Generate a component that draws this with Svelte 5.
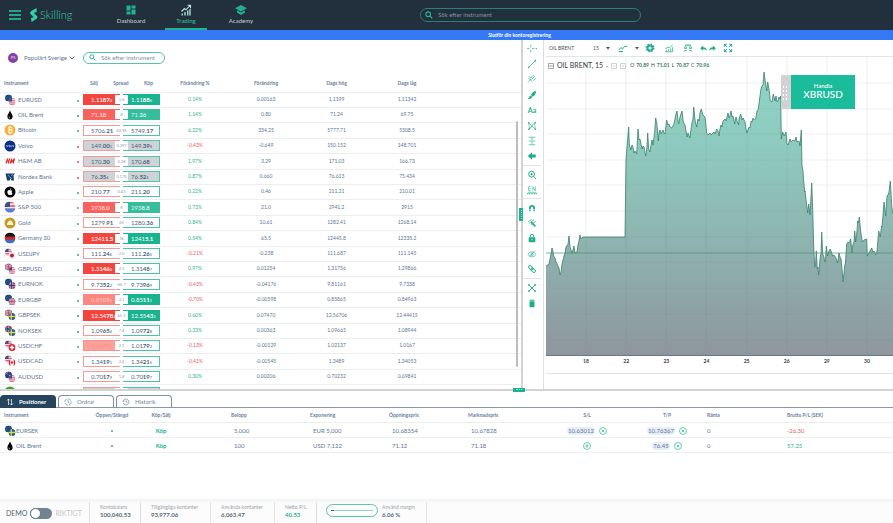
<script>
  let query = $state('');
  let filter = $state('');
  let group = $state('Populärt Sverige');
  let live = $state(false);

  const nav = [
    { id: 'dashboard', label: 'Dashboard' },
    { id: 'trading', label: 'Trading', active: true },
    { id: 'academy', label: 'Academy' }
  ];

  // s / b: [leading digits, highlighted digits, fractional pip]
  const rows = [
    { n: 'EURUSD', f: ['eu', 'us'], s: ['1.11', '87', '0'], sp: '1.6', b: ['1.11', '88', '6'], st: ['red', 'green'], v: ['0.14%', '0.00163', '1.1199', '1.11342'] },
    { n: 'OIL Brent', f: ['oil'], s: ['71.', '18', ''], sp: '8', b: ['71.', '26', ''], st: ['red2', 'green2'], v: ['1.14%', '0.80', '71.24', '69.75'] },
    { n: 'Bitcoin', f: ['btc'], s: ['5706.', '21', ''], sp: '42.96', b: ['5749.', '17', ''], st: ['', ''], v: ['6.22%', '334.25', '5777.71', '5308.5'] },
    { n: 'Volvo', f: ['volvo'], down: true, s: ['149.', '00', '1'], sp: '0.397', b: ['149.', '39', '8'], st: ['grey', 'grey'], v: ['-0.43%', '-0.649', '150.152', '148.701'] },
    { n: 'H&M AB', f: ['hm'], down: true, s: ['170.', '30', ''], sp: '0.38', b: ['170.', '68', ''], st: ['grey', 'grey'], v: ['1.97%', '3.29', '171.03', '166.73'] },
    { n: 'Nordea Bank', f: ['nordea'], down: true, s: ['76.', '35', '4'], sp: '0.170', b: ['76.', '52', '4'], st: ['grey', 'grey'], v: ['0.87%', '0.660', '76.613', '75.434'] },
    { n: 'Apple', f: ['apple'], s: ['210.', '77', ''], sp: '0.43', b: ['211.', '20', ''], st: ['', ''], v: ['0.22%', '0.46', '211.21', '210.01'] },
    { n: 'S&P 500', f: ['sp'], s: ['293', '8.0', ''], sp: '8', b: ['293', '8.8', ''], st: ['red2', 'green2'], v: ['0.73%', '21.0', '2941.2', '2915'] },
    { n: 'Gold', f: ['gold'], s: ['1279.', '91', ''], sp: '45', b: ['1280.', '36', ''], st: ['', ''], v: ['0.84%', '10.61', '1282.41', '1268.14'] },
    { n: 'Germany 30', f: ['dax'], s: ['1241', '1.5', ''], sp: '36', b: ['1241', '5.1', ''], st: ['red', 'green'], v: ['0.54%', '65.5', '12445.8', '12335.2'] },
    { n: 'USDJPY', f: ['us', 'jp'], s: ['111.', '24', '6'], sp: '2.0', b: ['111.', '26', '5'], st: ['', ''], v: ['-0.21%', '-0.238', '111.687', '111.145'] },
    { n: 'GBPUSD', f: ['gb', 'us'], s: ['1.31', '46', '6'], sp: '2.1', b: ['1.31', '48', '7'], st: ['red', ''], v: ['0.97%', '0.01254', '1.31756', '1.29866'] },
    { n: 'EURNOK', f: ['eu', 'no'], s: ['9.73', '52', '2'], sp: '44.7', b: ['9.73', '96', '9'], st: ['', ''], v: ['-0.43%', '-0.04176', '9.81161', '9.7338'] },
    { n: 'EURGBP', f: ['eu', 'gb'], s: ['0.85', '09', '0'], sp: '2.1', b: ['0.85', '11', '1'], st: ['pink', 'green'], v: ['-0.70%', '-0.00598', '0.85865', '0.84963'] },
    { n: 'GBPSEK', f: ['gb', 'se'], s: ['12.54', '78', '2'], sp: '65.1', b: ['12.55', '43', '3'], st: ['red', 'green'], v: ['0.60%', '0.07470', '12.56706', '12.44415'] },
    { n: 'NOKSEK', f: ['no', 'se'], s: ['1.09', '65', '4'], sp: '7.4', b: ['1.09', '72', '8'], st: ['', ''], v: ['0.33%', '0.00363', '1.09665', '1.08944'] },
    { n: 'USDCHF', f: ['us', 'ch'], s: ['1.01', '77', '1'], sp: '2.1', b: ['1.01', '79', '2'], st: ['faded', ''], v: ['-0.13%', '-0.00129', '1.02137', '1.0167'] },
    { n: 'USDCAD', f: ['us', 'ca'], s: ['1.34', '19', '1'], sp: '2.4', b: ['1.34', '21', '5'], st: ['', ''], v: ['-0.41%', '-0.00545', '1.3489', '1.34053'] },
    { n: 'AUDUSD', f: ['au', 'us'], s: ['0.70', '17', '9'], sp: '1.8', b: ['0.70', '19', '7'], st: ['', ''], v: ['0.30%', '0.00206', '0.70232', '0.69841'] },
    { n: '', f: ['green'], s: ['', '', ''], sp: '', b: ['', '', ''], st: ['grey', 'grey'], v: ['', '', '', ''] }
  ];

  const tools = [
    ['cross', 'line', 'fork', 'brush', 'text', 'pattern', 'range', 'back'],
    ['zoomin', 'measure'],
    ['magnet', 'wand', 'lock', 'eye', 'link'],
    ['tree', 'trash']
  ];

  const positions = [
    { n: 'EURSEK', f: ['eu', 'se'], amount: '5,000', exp: 'EUR 5,000', open: '10.68354', mkt: '10.67828', sl: '10.63012', tp: '10.76367', rate: '0', pl: '-26.30' },
    { n: 'OIL Brent', f: ['oil'], amount: '100', exp: 'USD 7,122', open: '71.12', mkt: '71.18', sl: '', tp: '76.45', rate: '0', pl: '57.25' }
  ];

  const account = [
    ['Kontobalans', '100,040.53', 'w1'],
    ['Tillgängliga kontanter', '93,977.06', 'w2'],
    ['Använda kontanter', '6,063.47', 'w3'],
    ['Netto P/L', '40.53', 'w4']
  ];

  const line =
    '546,267 549,265 551,255 552,249 553,253 554,258 555,259 556,263 558,267 559,269 560,276 561,273 562,265 564,257 565,254 566,248 568,245 569,237 570,248 572,254 573,251 574,247 575,254 577,253 578,246 579,242 580,236 581,240 583,238 625,238 ' +
    '626,161 627,148 628.7,128 629.3,146 631,151 632,146 633,148 634,154 635,152 636.7,155 638,130 639,141 640,140 641,145 642,150 643,147 644,148 645.7,157 647,148 647.7,134 648.7,150 650,153 651,146 652,141 653,146 654.7,133 655.7,119 657,126 658.3,142 659,134 660,131 661,135 663,131 664,134 665,135 666.7,121 668,126 669,125 670,128 671.7,129 673,127 674,125 675.7,116 677,112 678,122 678.7,125 680,118 682,112 683.3,123 685,126 687,138 688,134 690,139 691,130 692,124 693,120 693.7,108 695,121 696.7,128 698,120 699,122 700,114 701.3,110 703,116 705,118 706.7,134 708,136 710,134 711,136 714,133 715,135 716.7,130 718,132 719,137 720,130 721,126 722,128 723,122 725,120 726,122 727,118 728,114 729,119 730,117 731,112 732,118 733,117 734.7,125 736,118 737,122 738.7,126 739,120 740.7,115 742,121 743,119 745,123 746,130 747,134 749,128 750,129 751,122 752,123 753,119 754,121 755.7,120 757,112 758.3,110 760,97 761,90 762,87 763,86 764,73 765,81 765.7,85 766.7,92 767.7,83 769,90 770.3,102 772,103 773.3,95 775,102 776,97 777,103 778,102 779,98 780,100 780.7,97 ' +
    '781.3,140 782.7,133 784.3,137 786,133 787,145 788,146 790,140 791,143 793,141 795,142 796,138 797,143 799,142 800,147 801.3,131 802,167 803,172 803.5,180 804.7,193 805,192 806.3,203 807.7,214 808.7,205 810,216 811.7,184 812.7,210 813.7,247 814.7,268 815.5,266 816.3,252 817.3,270 818,268 818.7,276 820.3,257 821,255 821.7,233 822.7,255 824,258 824.7,263 825.5,262 826.3,247 827.5,257 829,252 830.3,250 832.7,257 834,256 836,259 837.7,264 839,254 840,258 841,260 842,270 843,283 844.7,267 845.5,263 846.7,245 848,243 849,244 850.7,240 852,254 853,245 854,243 854.7,232 855.7,243 857,232 857.7,222 858.5,224 859.3,218 860.5,231 861.5,238 862.3,243 864,241 866.7,240 867.3,257 870,252 871.7,249 873,253 874,252 875.7,256 877,252 878.7,232 880.3,238 881.5,227 882,228 882.7,220 884,203 885.7,217 887,197 888,196 889,193 890.3,182 891,194 891.7,207 893,215';

  const gridX = [586, 626, 666, 706, 747, 787, 827, 867];
  const gridY = [84, 110, 135, 161, 186, 212, 238, 263, 289, 315, 341];
  const days = ['18', '22', '23', '24', '25', '26', '29', '30'];
</script>

{#snippet flag(code)}
  {#if code === 'eu'}
    <rect width="10" height="10" fill="#174a84" /><circle cx="5" cy="5" r="2.6" fill="none" stroke="#b8b65c" stroke-width=".5" stroke-dasharray=".8 1.2" />
  {:else if code === 'us'}
    <rect width="10" height="10" fill="#f4e6ea" /><path d="M0 1h10M0 4h10M0 7h10M0 9.5h10" stroke="#d8526a" stroke-width="1.4" /><rect width="5" height="5" fill="#3a4f8f" />
  {:else if code === 'gb'}
    <rect width="10" height="10" fill="#33508f" /><path d="M0 0l10 10M10 0L0 10M5 0v10M0 5h10" stroke="#e9dfe8" stroke-width="2" /><path d="M0 0l10 10M10 0L0 10M5 0v10M0 5h10" stroke="#d43a52" stroke-width="1.1" />
  {:else if code === 'jp'}
    <rect width="10" height="10" fill="#f3eef0" /><circle cx="5" cy="5" r="2.8" fill="#c81f3f" />
  {:else if code === 'no'}
    <rect width="10" height="10" fill="#c8324a" /><path d="M4 0v10M0 5h10" stroke="#fff" stroke-width="3" /><path d="M4 0v10M0 5h10" stroke="#1c3f86" stroke-width="1.8" />
  {:else if code === 'se'}
    <rect width="10" height="10" fill="#175a94" /><path d="M4 0v10M0 5h10" stroke="#f3d23c" stroke-width="1.8" />
  {:else if code === 'ch'}
    <rect width="10" height="10" fill="#dc2236" /><path d="M5 2v6M2 5h6" stroke="#fff" stroke-width="2.2" />
  {:else if code === 'ca'}
    <rect width="10" height="10" fill="#fff" /><path d="M0 0h2.6v10H0zM7.4 0H10v10H7.4zM5 2.4l2 2.6-2 2.6-2-2.600z" fill="#d8293d" />
  {:else if code === 'au'}
    <rect width="10" height="10" fill="#25408a" /><path d="M0 0l5 5M5 0L0 5" stroke="#e46a7b" /><circle cx="7" cy="6" r="1" fill="#fff" />
  {/if}
{/snippet}

{#snippet badge(codes)}
  <svg class="badge" viewBox="0 0 12 12" aria-hidden="true">
    {#if codes.length === 2}
      <g transform="translate(1 0.5) scale(.7)"><g clip-path="url(#disc)">{@render flag(codes[0])}</g></g>
      <g transform="translate(4.5 4) scale(.7)"><g clip-path="url(#disc)">{@render flag(codes[1])}</g></g>
    {:else if codes[0] === 'oil'}
      <path d="M6 1.5C7 4 8.6 5.5 8.6 7.6a2.6 2.8 0 0 1-5.2 0C3.4 5.5 5 4 6 1.5z" fill="#050505" /><path d="M5 7.6q0 1.3 1 1.6" stroke="#fff" stroke-width=".6" fill="none" />
    {:else if codes[0] === 'btc'}
      <circle cx="6" cy="6" r="5.5" fill="#f7b03c" /><path d="M4.3 3.3h2.4q1.3 0 1.3 1.3T6.7 5.9H5h2q1.400 0 1.4 1.4T7 8.7H4.3M5 3.3v5.4M5.5 2.3v1M6.8 2.3v1M5.5 8.7v1M6.8 8.7v1" fill="none" stroke="#fff" stroke-width=".9" />
    {:else if codes[0] === 'volvo'}
      <circle cx="6" cy="6" r="5.5" fill="#0d2f86" /><path d="M2.5 5l.8 2 .8-2M5 5.2h1v1.6H5zM7 5v2h.8M8.5 5l.7 2 .7-2" fill="none" stroke="#b9c7ec" stroke-width=".6" />
    {:else if codes[0] === 'hm'}
      <path d="M3.6 3.5L2 8.5M5.600 3.5L4.200 8.5M2.6 6.200h2.6M6.300 8.500L7.600 3.700l.4 3.300 2.500-3.500-1.300 5" fill="none" stroke="#dc2a2a" stroke-width="1.2" />
    {:else if codes[0] === 'nordea'}
      <path d="M1.500 2.500h9.500l-1.500 1.800.5 5.200H7.500L6 7v2.500H3L2.500 7z" fill="#16406f" /><path d="M4 4l4 4M7 4.5l2-1" stroke="#8fb1cc" stroke-width=".7" />
    {:else if codes[0] === 'apple'}
      <circle cx="6" cy="6" r="5.5" fill="#050505" /><path d="M6 4.4C4.8 3.6 3.3 4.5 3.4 6.2 3.5 7.9 4.5 9.2 5.3 9q.7-.3 1.4 0c.8.2 1.5-.8 1.8-1.6-1-.5-1.1-1.9-.1-2.5C7.8 4 6.9 4 6 4.400zM6 4q0-1.4 1.3-1.7Q7.3 3.8 6 4z" fill="#fff" />
    {:else if codes[0] === 'sp'}
      <g transform="translate(.5 .5) scale(1.1)"><g clip-path="url(#disc)">{@render flag('us')}<rect y="6.5" width="10" height="3.5" fill="#4b84d8" /></g></g>
    {:else if codes[0] === 'gold'}
      <circle cx="6" cy="6" r="5.5" fill="#c99a1f" /><path d="M2.8 8l1-3 1.6-1.5h1.4L8.3 5l1 3z" fill="#fff6d8" />
    {:else if codes[0] === 'dax'}
      <g transform="translate(.5 .5) scale(1.1)"><g clip-path="url(#disc)"><rect width="10" height="4" fill="#151515" /><rect y="4" width="10" height="3" fill="#d8222a" /><rect y="6.5" width="10" height="3.5" fill="#3f6fc6" /></g></g>
    {:else}
      <circle cx="6" cy="6" r="5.5" fill="#3ca51e" />
    {/if}
  </svg>
{/snippet}

{#snippet search()}
  <svg class="glass" viewBox="0 0 8 8" aria-hidden="true"><circle cx="3.2" cy="3.2" r="2.3" /><path d="M5 5l2.3 2.3" /></svg>
{/snippet}

{#snippet tool(id)}
  <svg class="ic" viewBox="0 0 12 12" aria-hidden="true">
    {#if id === 'cross'}<path d="M4.500 1v3M4.500 7v3M0 5.5h3M6 5.5h3" stroke-width=".8" /><circle class="s" cx="11.200" cy="5.500" r=".8" />
    {:else if id === 'line'}<path d="M2.5 9.5l7-7" stroke-width=".8" /><circle class="s" cx="2" cy="10" r="1" /><circle class="s" cx="10" cy="2" r="1" />
    {:else if id === 'fork'}<path d="M1 10l4-4M2 5l4 4M4 5l4-4M5.5 6.5l4-4M7 8l4-3M2 3l3 2" stroke-width=".8" />
    {:else if id === 'brush'}<path class="s" d="M10.5 1c.8 2.5-.5 5.200-3.200 7L4.700 6C6 3.700 8 1.700 10.5 1zM4.200 6.500L6.600 8.500C5 10.700 3.5 11 1 11 2.5 9.5 2.2 8 4.2 6.5z" />
    {:else if id === 'pattern'}<path d="M2 2l1 8 6-8 1 8M2 2l8 8M2 10l4-4" stroke-width=".7" /><circle class="s" cx="2" cy="2" r=".9" /><circle class="s" cx="10" cy="2" r=".9" /><circle class="s" cx="2" cy="10" r=".9" /><circle class="s" cx="10" cy="10" r=".9" />
    {:else if id === 'range'}<path d="M2 1.5h8M2 6h8M2 10.5h8M6 2v3M6 7v3" stroke-width=".8" />
    {:else if id === 'back'}<path class="s" d="M1 6L6 1.500v2.700h4.500v3.600H6V10.500z" />
    {:else if id === 'zoomin'}<circle cx="5.5" cy="5" r="3.5" /><path d="M8 7.8L10.8 10.8M4 5h3M5.5 3.5v3" />
    {:else if id === 'measure'}<path d="M0 10.5h12" stroke-width="1.4" stroke-dasharray="1.500 .6" /><path d="M1 8.800h10M2 2h2.5M2 4.5h2.5M2 7h2.5M2 2v5M7 7V2l3 5V2" stroke-width=".7" />
    {:else if id === 'magnet'}<path d="M3.5 10V6a2.5 2.5 0 0 1 5 0v4" stroke-width="2.2" /><path class="w" d="M2 8.2h3M7 8.2h3" />
    {:else if id === 'wand'}<path d="M5 5l5 5" stroke-width="2" /><path d="M1.500 4.500l4-2.500M2.5 6.5l6-4.500M4.500 8l6-4" stroke-width=".9" />
    {:else if id === 'lock'}<rect class="s" x="2" y="5" width="8" height="6" rx=".6" /><path d="M4 5V3.5a2 2 0 0 1 4 0V5" /><path class="w" d="M6 7v1.5" />
    {:else if id === 'eye'}<path d="M1 6.5q5-6.5 10 0q-5 6-10 0zM2.5 10L9.5 2" stroke-width=".7" /><circle cx="6" cy="6.3" r="1.5" stroke-width=".7" />
    {:else if id === 'link'}<rect x="1.500" y="2.8" width="6" height="3.4" rx="1.7" transform="rotate(45 4.5 4.5)" /><rect x="4.5" y="5.8" width="6" height="3.4" rx="1.7" transform="rotate(45 7.5 7.5)" />
    {:else if id === 'tree'}<path d="M2.5 2.5l7 7M9.5 2.5l-7 7" /><circle class="s" cx="2.3" cy="2.3" r="1.1" /><circle class="s" cx="9.7" cy="2.3" r="1.1" /><circle class="s" cx="2.3" cy="9.7" r="1.1" /><circle class="s" cx="9.7" cy="9.7" r="1.1" />
    {:else if id === 'trash'}<path class="s" d="M3 4h6v7H3zM3 2h6v1.2H3z" />{/if}
  </svg>
{/snippet}

{#snippet price(p, side, tone)}
  <button class="price {side} {tone}" aria-label={side === 'sell' ? 'Sälj' : 'Köp'}>{p[0]}<b>{p[1]}</b><small>{p[2]}</small></button>
{/snippet}

<svg class="defs" aria-hidden="true"><defs><clipPath id="disc"><circle cx="5" cy="5" r="5" /></clipPath></defs></svg>

<div class="app">
  <header>
    <button class="menu" aria-label="Meny"><i></i><i></i><i></i></button>
    <a class="logo" href="#home">
      <svg viewBox="0 0 10 14" aria-hidden="true"><path d="M7.5 0L2 3.2Q.4 4.5 1.5 6L4.8 9 2 10.2 2.6 14 7.6 10.8Q9.2 9.4 8 8L4.8 5 7.8 3.8z" fill="#2fd3a5" /></svg>
      <span>Skilling</span>
    </a>
    <nav>
      {#each nav as item}
        <a href="#{item.id}" class:active={item.active}>
          <svg viewBox="0 0 12 12" aria-hidden="true">
            {#if item.id === 'dashboard'}<path d="M1.5 1.5h4v5h-4zM6.5 1.5h4v3h-4zM1.5 7.5h4v3h-4zM6.5 5.5h4v5h-4z" fill="#21b18e" />
            {:else if item.id === 'trading'}<path d="M2.2 9.5v2M5 8v3.5M7.8 6.5v5M10 5v6.5" stroke="#b9e6dc" stroke-width="1.3" /><path d="M1.5 7.5l3-3 1.5 1.3L10 1.5M7.5 1.2h3v3" fill="none" stroke="#b9e6dc" stroke-width="1.1" />
            {:else}<path d="M6 1l6 3.2-6 3.2L0 4.2zM2.2 6.3L6 8.4l3.800-2.100v2.5L6 10.9 2.2 8.8z" fill="#21b18e" />{/if}
          </svg>
          {item.label}
        </a>
      {/each}
    </nav>
    <label class="pill top">
      {@render search()}
      <input type="text" placeholder="Sök efter instrument" aria-label="Sök efter instrument" bind:value={query} />
    </label>
  </header>

  <div class="notice"><a href="#register">Slutför din kontoregistrering</a></div>

  <main>
    <section class="market">
      <div class="filters">
        <span class="dot-group">PS</span>
        <label class="group">
          <select bind:value={group} aria-label="Instrumentgrupp"><option>Populärt Sverige</option></select>
          <svg viewBox="0 0 6 4" aria-hidden="true"><path d="M.7.7L3 3 5.3.7" fill="none" stroke="#53687f" /></svg>
        </label>
        <label class="pill">
          {@render search()}
          <input type="text" placeholder="Sök efter instrument" aria-label="Filtrera instrument" bind:value={filter} />
        </label>
      </div>
      <div class="scroll">
        <table class="quotes">
          <colgroup><col class="c-name" /><col class="c-price" /><col class="c-pct" /><col class="c-chg" /><col class="c-high" /><col class="c-low" /><col /></colgroup>
          <thead>
            <tr><th class="left">Instrument</th><th><div class="heads"><span>Sälj</span><span>Spread</span><span>Köp</span></div></th><th>Förändring %</th><th>Förändring</th><th>Dags hög</th><th>Dags låg</th><th></th></tr>
          </thead>
          <tbody>
            {#each rows as r}
              <tr>
                <td><div class="name">{@render badge(r.f)}<span>{r.n}</span><i class:down={r.down}></i></div></td>
                <td><div class="pair">{@render price(r.s, 'sell', r.st[0])}{@render price(r.b, 'buy', r.st[1])}<span class="spread">{r.sp}</span></div></td>
                <td class={r.v[0][0] === '-' ? 'neg' : 'pos'}>{r.v[0]}</td>
                <td>{r.v[1]}</td><td>{r.v[2]}</td><td>{r.v[3]}</td><td></td>
              </tr>
            {/each}
          </tbody>
        </table>
        <div class="thumb"></div>
      </div>
    </section>

    <div class="split-v"><i></i></div>

    <section class="trade">
      <div class="tools">
        {#each tools as set}
          <div class="set n{set.length}">
            {#each set as id}
              <button aria-label={id}>{#if id === 'text'}Aa{:else}{@render tool(id)}{/if}</button>
            {/each}
          </div>
        {/each}
      </div>

      <div class="chart">
        <div class="bar">
          <button class="sym">OIL BRENT</button>
          <button class="int">15</button>
          <svg class="caret" viewBox="0 0 4 3"><path d="M0 0h4L2 2.5z" /></svg>
          <svg class="ic a" viewBox="0 0 12 12"><path d="M1 8.500l2.500-3 2 1.500L8 4h3M1 10.200h5" stroke-width="1.2" /></svg>
          <svg class="caret b" viewBox="0 0 4 3"><path d="M0 0h4L2 2.5z" /></svg>
          <svg class="ic gear" viewBox="0 0 12 12"><circle cx="6" cy="6" r="3" stroke-width="2.2" /><circle cx="6" cy="6" r="4.6" stroke-width="1.6" stroke-dasharray="1.8 1.81" /></svg>
          <svg class="ic c" viewBox="0 0 12 12"><path d="M1 10.5h10M1.5 7l3-2 2 1 4-4M3 10V8M5.5 10V7.5M8 10V6.5M10.3 10V5" stroke-width=".9" /></svg>
          <svg class="ic c" viewBox="0 0 12 12"><path d="M2.500 2.500h7M6 1.500v2.500M1.500 6.500L3 3l1.5 3.500zM7.5 6.500L9 3l1.5 3.500zM2 10.500V9h2.500M10 10.500V9H7.500" stroke-width=".9" /></svg>
          <svg class="ic u" viewBox="0 0 12 12"><path class="s" d="M1.5 5.5L5.5 2v2.2Q10 4.5 10.5 9 8.5 6.8 5.5 6.8V9z" /></svg>
          <svg class="ic r" viewBox="0 0 12 12"><path class="s" d="M10.5 5.5L6.5 2v2.2Q2 4.5 1.5 9 3.5 6.8 6.5 6.8V9z" /></svg>
          <svg class="ic f" viewBox="0 0 12 12"><path d="M1.5 4.5v-3h3M7.5 1.5h3v3M10.5 7.5v3h-3M4.5 10.5h-3v-3M2 2l2.5 2.5M10 2L7.5 4.5M10 10L7.5 7.5M2 10l2.5-2.5" stroke-width="1.2" /></svg>
        </div>

        <div class="plot">
          <svg class="series" viewBox="546 58 347 298" preserveAspectRatio="none" aria-label="OIL BRENT">
            <defs>
              <linearGradient id="area" gradientUnits="userSpaceOnUse" x1="0" y1="73" x2="0" y2="356">
                <stop offset="0" stop-color="#8ed6c8" /><stop offset=".35" stop-color="#8ec5bb" /><stop offset="1" stop-color="#8e979e" />
              </linearGradient>
            </defs>
            <polygon points="546,356 {line} 893,356" fill="url(#area)" />
            <g class="grid">
              {#each gridX as x}<line x1={x} x2={x} y1="58" y2="356" />{/each}
              {#each gridY as y}<line x1="546" x2="893" y1={y} y2={y} />{/each}
            </g>
            <polyline points={line} fill="none" stroke="#37806b" stroke-width=".8" stroke-linejoin="round" />
            <line x1="546" x2="893" y1="254" y2="254" stroke="#4f8f72" stroke-width=".7" />
          </svg>
          <div class="legend">
            <svg viewBox="0 0 6 6"><path d="M.5.5h5v5h-5zM1 3h4" /></svg>
            <strong>OIL BRENT, 15</strong><em>·</em>
            <svg class="lite" viewBox="0 0 6 6"><path d="M.5.5h5v5h-5zM2 3h2" /></svg>
            <svg class="lite" viewBox="0 0 6 6"><path d="M.5.5h5v5h-5zM2 3h2" /></svg>
            <span class="ohlc"><b>O</b><i>70.89</i><b>H</b><i>71.01</i><b>L</b><i>70.87</i><b>C</b><i>70.96</i></span>
          </div>
          <div class="deal">
            <span class="grip"></span>
            <button><span>Handla</span>XBRUSD</button>
          </div>
        </div>
        <div class="axis">{#each days as d}<span>{d}</span>{/each}</div>
      </div>
    </section>
  </main>

  <section class="bottom">
    <div class="split-h"><i></i></div>
    <div class="tabs">
      <button class="on"><svg viewBox="0 0 8 8"><path d="M2.5 7V1M1 2.5L2.5 1 4 2.5M5.5 1v6M4 5.5L5.5 7 7 5.5" /></svg>Positioner</button>
      <button><svg viewBox="0 0 8 8"><circle cx="4" cy="4" r="3.2" stroke-dasharray="4 .8" /><path d="M4 2v2l1.5 1" /></svg>Ordrar</button>
      <button><svg viewBox="0 0 8 8"><path d="M1.2 5A3 3 0 1 0 1.2 3M0 2.500l1.2 1.300L2.5 2.7M4.2 2.3V4l1.3 1" /></svg>Historik</button>
    </div>
    <table class="positions">
      <colgroup><col class="p1" /><col class="p2" /><col class="p3" /><col class="p4" /><col class="p5" /><col class="p5" /><col class="p5" /><col class="p6" /><col class="p6" /><col class="p6" /><col /></colgroup>
      <thead>
        <tr><th>Instrument</th><th class="mid">Öppen/Stängd</th><th class="mid">Köp/Sälj</th><th class="amount">Belopp</th><th>Exponering</th><th>Öppningspris</th><th>Marknadspris</th><th class="mid">S/L</th><th class="mid">T/P</th><th>Ränta</th><th>Brutto P/L (SEK)</th></tr>
      </thead>
      <tbody>
        {#each positions as p}
          <tr>
            <td><div class="name">{@render badge(p.f)}<span>{p.n}</span></div></td>
            <td class="mid"><i class="open"></i></td>
            <td class="mid buyside">Köp</td>
            <td class="amount">{p.amount}</td>
            <td class="in">{p.exp}</td><td class="in">{p.open}</td><td class="in">{p.mkt}</td>
            {#each [p.sl, p.tp] as level}
              <td><div class="level">
                {#if level}<span>{level}</span>{/if}
                <button aria-label={level ? 'Ta bort' : 'Lägg till'}><svg viewBox="0 0 9 9"><circle cx="4.5" cy="4.5" r="3.9" />{#if level}<path d="M3.2 3.2l2.6 2.6M5.8 3.2L3.2 5.8" />{:else}<path d="M4.5 2.7v3.6M2.7 4.5h3.6" />{/if}</svg></button>
              </div></td>
            {/each}
            <td>{p.rate}</td>
            <td class={p.pl[0] === '-' ? 'neg' : 'pos'}>{p.pl}</td>
          </tr>
        {/each}
      </tbody>
    </table>
  </section>

  <footer>
    <label class="mode">DEMO<input type="checkbox" role="switch" bind:checked={live} /><span>RIKTIGT</span></label>
    {#each account as [label, value, w]}
      <div class="stat {w}"><span>{label}</span><b>{value}</b></div>
    {/each}
    <div class="stat margin">
      <div class="gauge"><i></i></div>
      <div><span>Använd margin</span><b>6.06 %</b></div>
    </div>
  </footer>
</div>

<style>
  :global(body) { margin: 0; background: #fff; }
  .app { display: flex; flex-direction: column; height: 100vh; min-height: 420px; overflow: hidden; font: 6px/8px Lato, "Open Sans", sans-serif; color: #5c7796; }
  .app *, .app *::before { box-sizing: border-box; }
  .defs { position: absolute; width: 0; height: 0; }
  button, input, select { font: inherit; color: inherit; background: none; border: 0; padding: 0; margin: 0; outline: 0; }
  button { cursor: pointer; }
  a { color: inherit; text-decoration: none; }
  svg { display: block; flex: none; }

  header { display: flex; align-items: center; flex: none; height: 30px; background: #22303d; color: #c6ced6; }
  .menu { display: flex; flex-direction: column; gap: 2px; width: 12px; margin-left: 9px; }
  .menu i { height: 2px; background: #25a488; }
  .logo { display: flex; align-items: center; gap: 1px; width: 80px; margin-left: 8px; font-size: 11px; line-height: 14px; font-weight: 300; color: #2fd3a5; }
  .logo svg { width: 10px; height: 14px; }
  nav { display: flex; gap: 13px; align-self: stretch; margin-left: 1px; }
  nav a { display: flex; flex-direction: column; align-items: center; width: 42px; padding-top: 4px; border-bottom: 2px solid transparent; }
  nav svg { width: 12px; height: 12px; margin-bottom: 1px; }
  nav .active { color: #2cc39e; border-color: #22b392; }
  .pill { display: flex; align-items: center; gap: 5px; height: 12px; width: 82px; padding: 0 5px; border: 1px solid #57c3ac; border-radius: 8px; }
  .pill input { flex: 1; min-width: 0; height: 8px; }
  .pill input::placeholder { color: #8492a1; opacity: 1; }
  .glass { width: 7px; height: 7px; fill: none; stroke: #27b593; stroke-width: 1.1; }
  .pill.top { flex: 0 1 221px; height: 14px; margin-left: 158px; padding-left: 4px; border-color: #2a7f76; }
  .top .glass { width: 8px; height: 8px; }

  .notice { flex: none; height: 10px; padding-left: 146px; background: #3478f6; color: #fff; font-size: 5px; line-height: 10px; font-weight: 700; text-align: center; }

  main { flex: 1; min-height: 0; display: grid; grid-template-columns: minmax(0, 521fr) 2px minmax(0, 370fr); }
  .market { display: flex; flex-direction: column; min-height: 0; }
  .filters { display: flex; align-items: center; flex: none; height: 35px; padding-left: 8px; }
  .dot-group { width: 10px; height: 10px; margin-right: 6px; border-radius: 5px; background: #8241a5; color: #d9b9ea; font-size: 4px; line-height: 10px; font-weight: 700; text-align: center; }
  .group { display: flex; align-items: center; gap: 1px; width: 59px; color: #60768d; }
  .group select { appearance: none; width: 44px; height: 10px; }
  .group svg { width: 6px; height: 4px; }
  .scroll { position: relative; flex: 1; min-height: 0; overflow: hidden; }
  table { width: 100%; table-layout: fixed; border-collapse: collapse; }
  th, td { padding: 0; white-space: nowrap; }
  th { font-size: 5px; line-height: 7px; font-weight: 700; color: #6a80a0; }
  .quotes { font-size: 5px; line-height: 7px; text-align: center; }
  .quotes thead tr { height: 17px; }
  .quotes tbody tr { height: 15px; box-shadow: inset 0 1px #eceef0; }
  .quotes tbody tr:nth-child(5n + 3), .quotes tbody tr:nth-child(5n) { height: 16px; }
  .c-name { width: 83px; } .c-price { width: 77px; } .c-pct { width: 70px; } .c-chg { width: 72px; } .c-high { width: 69px; } .c-low { width: 72px; }
  .left { text-align: left; padding-left: 4px; }
  .heads { display: flex; justify-content: space-between; padding: 0 7px; }
  .name { display: flex; align-items: center; gap: 2px; padding-left: 4px; font-size: 6px; line-height: 8px; }
  .name i { width: 2px; height: 2px; margin: 2px 4px 0 auto; border-radius: 1px; background: #3aa88b; }
  .name i.down { background: #d84a5c; }
  .badge { width: 12px; height: 12px; }
  .pair { position: relative; display: flex; gap: 3px; height: 11px; }
  .price { flex: 1; height: 11px; border: 1px solid #f59a96; color: #4b6480; font-size: 6px; line-height: 9px; text-align: left; padding-left: 7px; white-space: nowrap; }
  .price.buy { border-color: #4cc5a9; }
  .price small { font-size: 4px; }
  .price.sell.red { background: #f4443e; border-color: #f4443e; color: #fff; }
  .price.sell.red2 { background: #f9635d; border-color: #f9635d; color: #ffd9d7; }
  .price.sell.pink { background: #fb8782; border-color: #fb8782; color: #fcc0bd; }
  .price.sell.faded { background: #fca09b; border-color: #fb918c; color: #f99691; }
  .price.buy.green { background: #18b48f; border-color: #18b48f; color: #fff; }
  .price.buy.green2 { background: #35bd9c; border-color: #35bd9c; color: #d9f5ee; }
  .price.grey { background: #cfd3d6; }
  .spread { position: absolute; left: 32px; top: 1px; width: 13px; height: 9px; background: #fff; color: #8a9bb0; font-size: 4px; line-height: 9px; text-align: center; }
  .neg { color: #ee5c5c; } .pos { color: #2bb58f; }
  .thumb { position: absolute; right: 3px; top: 46px; bottom: 22px; width: 2px; border-radius: 1px; background: #bdbdbd; }

  .split-v { position: relative; background: #d3d3d3; }
  .split-v i { position: absolute; left: -2px; top: 168px; width: 4px; height: 13px; background: #18b48f; }
  .split-v i::before, .split-h i::before { content: ""; position: absolute; inset: 2px 1px; border: 1px dotted #a9e5d6; border-width: 0 1px 0 0; }
  .trade { display: flex; min-width: 0; }
  .tools { flex: none; width: 21px; border-right: 1px solid #dcdfe2; }
  .set { display: flex; flex-direction: column; justify-content: space-around; align-items: center; padding: 1px 0; margin-right: 2px; border-bottom: 1px solid #e2e5e7; color: #1fae8b; }
  .set:last-child { border: 0; }
  .n8 { height: 126px; } .n2 { height: 33px; } .n5 { height: 80px; }
  .set button { width: 16px; height: 10px; display: flex; justify-content: center; align-items: center; font-size: 7px; line-height: 10px; font-weight: 700; }
  .ic { width: 10px; height: 10px; fill: none; stroke: #1fae8b; stroke-width: 1.2; }
  .ic .s { fill: #1fae8b; stroke: none; }
  .ic .w { stroke: #fff; stroke-width: 1; }
  .chart { flex: 1; min-width: 0; display: flex; flex-direction: column; padding: 0 0 15px 2px; }
  .bar { display: flex; align-items: center; flex: none; height: 17px; padding-left: 3px; color: #4a5058; font-size: 5px; border-bottom: 1px solid #e3e6e8; }
  .sym { width: 44px; text-align: left; } .int { width: 13px; text-align: left; }
  .caret { width: 4px; height: 3px; fill: #4a5058; }
  .a { margin-left: 8px; } .b { margin-left: 7px; } .gear { margin-left: 6px; } .c { margin-left: 9px; }
  .u, .f { margin-left: 6px; }
  .u, .r { width: 9px; height: 9px; }
  .plot { position: relative; flex: 1; min-height: 0; }
  .series { position: absolute; inset: 0; width: 100%; height: 100%; border-bottom: 1px solid #6e787e; }
  .grid { stroke: #6a7f88; stroke-opacity: .13; stroke-width: 1; }
  .legend { position: absolute; left: 2px; top: 4px; display: flex; align-items: center; gap: 3px; color: #333b42; line-height: 9px; }
  .legend svg { width: 6px; height: 6px; fill: none; stroke: #8b9298; stroke-width: .8; }
  .legend .lite { stroke: #c3c7ca; }
  .legend strong { font-size: 7px; font-weight: 400; }
  .legend em { width: 2px; }
  .ohlc { display: flex; gap: 2px; padding-left: 1px; font-size: 5px; color: #35805f; }
  .ohlc b { font-weight: 400; color: #333b42; } .ohlc i { font-style: normal; font-weight: 700; }
  .deal { position: absolute; right: 38px; top: 18px; display: flex; height: 34px; width: 74px; }
  .grip { flex: none; width: 10px; padding: 9px 2px; background: radial-gradient(circle, #fff 30%, transparent 45%) 2px 9px / 3px 4px content-box, #d2d2d2; }
  .deal button { flex: 1; padding-bottom: 4px; background: #1bbc9b; color: #fff; font-size: 10px; line-height: 10px; font-weight: 500; text-align: center; }
  .deal button span { display: block; font-size: 6px; line-height: 7px; }
  .axis { display: flex; justify-content: space-between; flex: none; height: 18px; padding: 1px 23px 0 37px; border-bottom: 1px solid #dfe2e4; color: #3c4248; font-size: 5px; font-weight: 700; }
  .axis span { width: 6px; text-align: center; }

  .bottom { flex: none; height: 110px; }
  .split-h { position: relative; height: 2px; background: #d3d3d3; }
  .split-h i { position: absolute; left: 57.5%; top: -1px; width: 12px; height: 4px; background: #18b48f; }
  .split-h i::before { inset: 1px 3px; border-width: 1px 0 0; }
  .tabs { display: flex; gap: 2px; height: 17px; padding-top: 4px; border-bottom: 1px solid #8b98a6; }
  .tabs button { display: flex; align-items: center; width: 56px; height: 13px; padding-left: 5px; gap: 5px; border: 1px solid #7d8fa1; border-bottom: 0; border-radius: 4px 4px 0 0; color: #71869d; }
  .tabs button.on { background: #26445d; border-color: #26445d; color: #fff; font-weight: 700; }
  .tabs svg { width: 8px; height: 8px; fill: none; stroke: currentColor; stroke-width: .7; }
  .positions { text-align: left; }
  .positions tr { height: 15px; box-shadow: inset 0 -1px #eceef0; }
  .positions th:first-child { padding-left: 4px; }
  .p1 { width: 86px; } .p2 { width: 52px; } .p3 { width: 46px; } .p4 { width: 126px; } .p5 { width: 79px; } .p6 { width: 80px; }
  .positions .mid { text-align: center; }
  .in { padding-left: 3px; }
  th.amount { padding-left: 47px; } td.amount { padding-left: 50px; }
  .positions .name { gap: 0; }
  .open { display: inline-block; width: 2px; height: 2px; border-radius: 1px; background: #3aa88b; vertical-align: middle; }
  .buyside { color: #12b48c; font-weight: 700; }
  .level { display: flex; justify-content: center; align-items: center; gap: 4px; }
  .level span { padding: 0 1px; background: #e6edf7; border-radius: 4px; }
  .level svg { width: 8px; height: 8px; fill: none; stroke: #2bb593; stroke-width: .8; }

  footer { display: flex; flex: none; height: 24px; background: linear-gradient(#f0f1f1, #fcfcfc 4px); color: #9aa3ab; }
  .mode { display: flex; align-items: center; gap: 3px; width: 89px; padding: 4px 0 0 6px; font-size: 7px; color: #4e6474; }
  .mode span { color: #c1c6ca; }
  .mode input { appearance: none; width: 22px; height: 11px; border-radius: 6px; background: #6f8491; }
  .mode input::before { content: ""; display: block; width: 11px; height: 11px; border-radius: 6px; border: 1px solid #5f7482; background: #fff; }
  .mode input:checked::before { margin-left: 11px; }
  .stat { margin-top: 3px; padding: 2px 0 0 10px; border-left: 1px solid #dfe2e4; font-size: 5px; line-height: 7px; }
  .stat span { display: block; }
  .stat b { display: block; font-size: 6px; line-height: 8px; color: #53687a; }
  .w1 { width: 51px; } .w2 { width: 70px; } .w3 { width: 64px; } .w4 { width: 42px; }
  .w4 b { color: #1fb58e; }
  .margin { display: flex; gap: 4px; width: 111px; padding-left: 9px; border-right: 1px solid #dfe2e4; }
  .gauge { display: flex; align-items: center; width: 52px; height: 13px; padding: 0 4px; border: 1px solid #5cc4a9; border-radius: 7px; }
  .gauge i { flex: 1; height: 1px; background: linear-gradient(90deg, #0f7a5e 3px, #8fd5c2 3px); }
</style>
